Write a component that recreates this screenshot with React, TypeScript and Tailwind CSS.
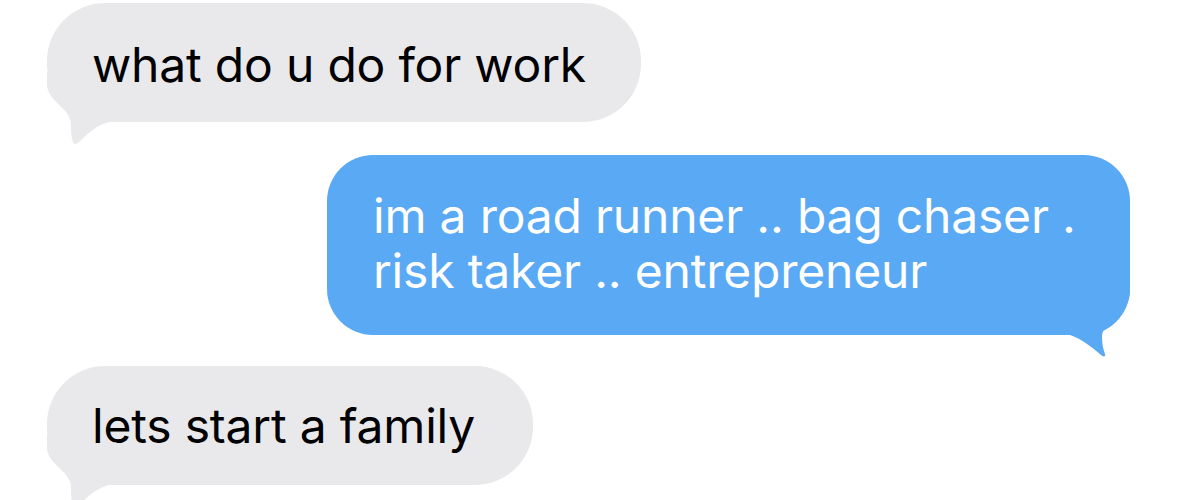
import type { ReactNode } from "react";

// iMessage-style bubble tails, drawn with the bubble's bottom corner as origin
function LeftTail({ color }: { color: string }) {
  return (
    <svg
      className="absolute left-0 top-[calc(100%-50px)] pointer-events-none"
      width="70"
      height="80"
      viewBox="0 -50 70 80"
    >
      <path
        fill={color}
        d="M0,-50 L0,-38 C0,-20 24,-14 24,2 C24,8 24,15 26,20 C27,23 30,22 32,20 C40,12 50,3 62,0 L62,-50 Z"
      />
    </svg>
  );
}

function RightTail({ color }: { color: string }) {
  return (
    <svg
      className="absolute right-0 top-[calc(100%-70px)] pointer-events-none"
      width="70"
      height="100"
      viewBox="-70 -70 70 100"
    >
      <path
        fill={color}
        d="M0,-70 L0,-45 C0,-20 -28,-15 -28,2 C-28,8 -27,14 -25,19 C-24,22 -27,22 -29,20 C-37,13 -48,4 -60,0 L-60,-70 Z"
      />
    </svg>
  );
}

function Received({ width, pt, children }: { width: string; pt: string; children: ReactNode }) {
  return (
    <div className={`relative h-[119px] ${width} ${pt} rounded-[58px] bg-[#e9e9eb] pl-[45px] text-[48px] leading-[55px] text-black`}>
      <LeftTail color="#e9e9eb" />
      <span className="relative">{children}</span>
    </div>
  );
}

export default function App() {
  return (
    <div className="w-[1179px] h-[500px] overflow-hidden bg-white flex flex-col font-['Inter',sans-serif] tracking-[-0.2px]">
      <div className="pl-[47px] pt-[3px]">
        <Received width="w-[594px]" pt="pt-[34px]">what do u do for work</Received>
      </div>

      <div className="mt-[33px] pl-[327px]">
        <div className="relative w-[803px] h-[180px] rounded-[46px] bg-[#5aa9f5] pl-[46px] pt-[33px] text-[48px] leading-[55px] text-white">
          <RightTail color="#5aa9f5" />
          <p className="relative">
            im a road runner .. bag chaser .
            <br />
            risk taker .. entrepreneur
          </p>
        </div>
      </div>

      <div className="mt-[31px] pl-[47px]">
        <Received width="w-[486px]" pt="pt-[32px]">lets start a family</Received>
      </div>
    </div>
  );
}
